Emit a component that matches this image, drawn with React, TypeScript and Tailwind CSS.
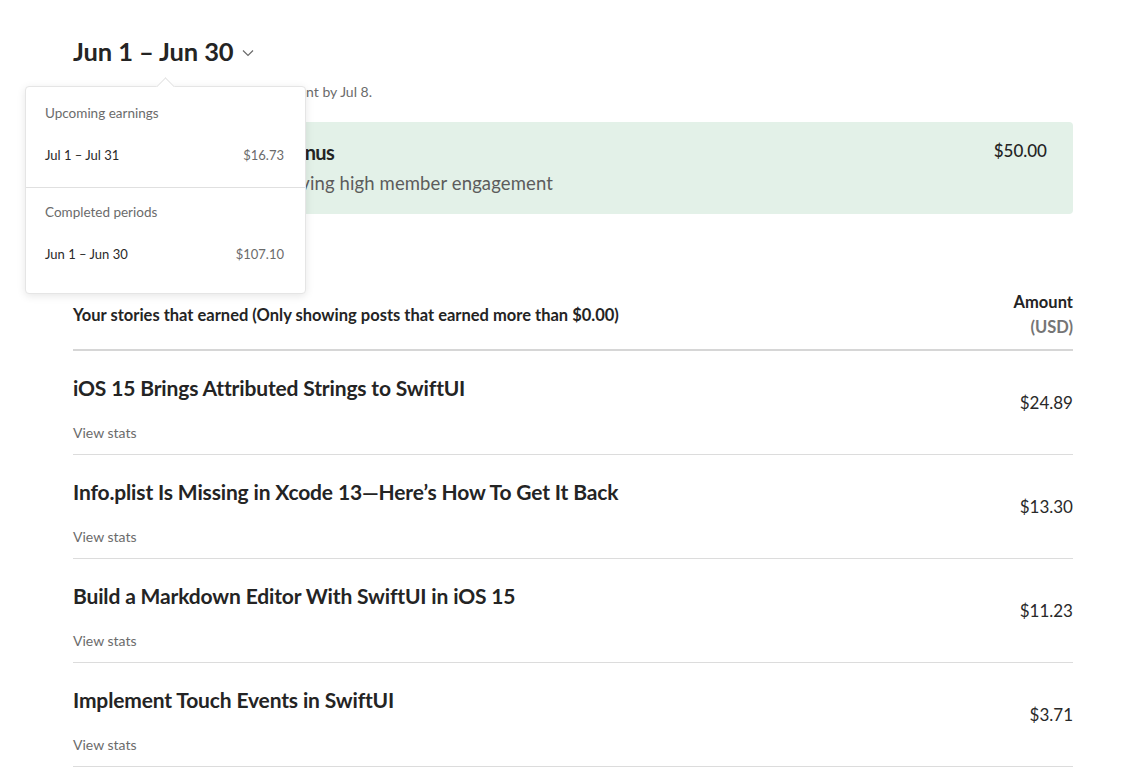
import React from "react";

const rows = [
  { title: "iOS 15 Brings Attributed Strings to SwiftUI", amount: "$24.89" },
  { title: "Info.plist Is Missing in Xcode 13\u2014Here\u2019s How To Get It Back", amount: "$13.30" },
  { title: "Build a Markdown Editor With SwiftUI in iOS 15", amount: "$11.23" },
  { title: "Implement Touch Events in SwiftUI", amount: "$3.71" },
];

export default function App() {
  return (
    <div className="relative min-h-screen bg-white text-[#242424]" style={{ fontFamily: "Lato, 'Open Sans', sans-serif" }}>
      <div className="ml-[73px] w-[1000px] pt-[30px]">
        <div className="flex items-center gap-[8px]">
          <h1 className="text-[25.5px] font-bold leading-[42px] tracking-[-0.1px]">Jun 1 – Jun 30</h1>
          <svg width="12" height="8" viewBox="0 0 12 8" className="mt-[4px]" fill="none" stroke="#6b6b6b" strokeWidth="1.2">
            <path d="M1 1.5l5 5 5-5" />
          </svg>
        </div>
        <p className="mt-[10px] text-[14px] leading-[20px] text-[#6b6b6b]">Your earnings for this period will be sent by Jul 8.</p>
        <div className="mt-[20px] flex h-[92px] justify-between rounded-[4px] bg-[#e3f1e8] pl-[24px] pr-[26px] pt-[16px]">
          <div>
            <div className="text-[20px] font-bold leading-[28px] tracking-[-0.6px]">Member Engagement Bonus</div>
            <div className="mt-[4px] text-[18.5px] leading-[26px] tracking-[0.12px] text-[#5c5c5c]">Given to a story for receiving high member engagement</div>
          </div>
          <div className="pt-[1px] text-[17px] leading-[24px] font-medium text-[#242424]">$50.00</div>
        </div>
        <div className="mt-[76px] flex items-start justify-between border-b-2 border-[#d6d6d6] pb-[9px]">
          <div className="mt-[13px] text-[16.5px] font-bold leading-[24px]">Your stories that earned (Only showing posts that earned more than $0.00)</div>
          <div className="text-right text-[16.5px] font-bold leading-[25px]">
            <div>Amount</div>
            <div className="text-[#757575]">(USD)</div>
          </div>
        </div>
        {rows.map((r) => (
          <div key={r.title} className="flex h-[104px] items-center justify-between border-b border-[#dcdcdc]">
            <div className="flex h-full flex-col pt-[21px]">
              <div className="text-[21px] font-bold leading-[32px] tracking-[-0.15px]">{r.title}</div>
              <div className="mt-[19px] text-[14px] leading-[20px] text-[#6b6b6b]">View stats</div>
            </div>
            <div className="text-[17px] leading-[24px] text-[#292929]">{r.amount}</div>
          </div>
        ))}
      </div>

      <div className="absolute left-[25px] top-[86px] w-[281px] rounded-[4px] border border-[#e5e5e5] bg-white shadow-[0_2px_8px_rgba(0,0,0,0.1)]">
        <div className="absolute -top-[7px] left-[133px] h-[13px] w-[13px] rotate-45 border-l border-t border-[#e5e5e5] bg-white" />
        <div className="relative pl-[19px] pr-[21px] pb-[23px] pt-[17px]">
          <div className="text-[13.5px] leading-[18px] text-[#6b6b6b]">Upcoming earnings</div>
          <div className="mt-[24px] flex justify-between text-[13px] leading-[18px] text-[#292929]">
            <span>Jul 1 – Jul 31</span>
            <span className="text-[#6b6b6b]">$16.73</span>
          </div>
        </div>
        <div className="border-t border-[#e0e0e0]" />
        <div className="pl-[19px] pr-[21px] pb-[30px] pt-[15px]">
          <div className="text-[13.5px] leading-[18px] text-[#6b6b6b]">Completed periods</div>
          <div className="mt-[24px] flex justify-between text-[13px] leading-[18px] text-[#292929]">
            <span>Jun 1 – Jun 30</span>
            <span className="text-[#6b6b6b]">$107.10</span>
          </div>
        </div>
      </div>
    </div>
  );
}
